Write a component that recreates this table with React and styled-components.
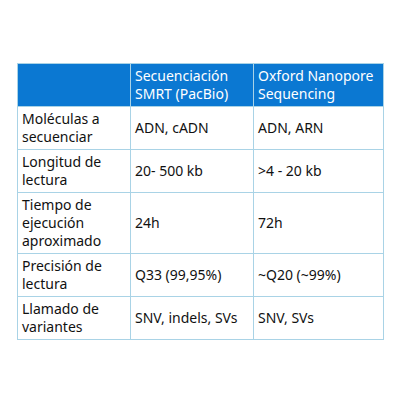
import React from "react";
import styled, { createGlobalStyle } from "styled-components";

const GlobalStyle = createGlobalStyle`
  html, body {
    margin: 0;
    padding: 0;
    background: #ffffff;
  }
  body {
    font-family: "Noto Sans", "Open Sans", sans-serif;
  }
`;

const Page = styled.div`
  width: 400px;
  height: 400px;
  padding: 63px 0 0 17px;
  box-sizing: border-box;
`;

const Table = styled.table`
  border-collapse: collapse;
  table-layout: fixed;
  width: 366px;
  font-size: 14px;
  line-height: 18px;
  color: #111;
`;

const HeadCell = styled.th`
  background: #0b78d2;
  color: #ffffff;
  font-weight: normal;
  text-align: left;
  vertical-align: top;
  padding: 3px 4px;
  border: 1px solid #a9d3e6;
  height: 35px;
`;

const Cell = styled.td`
  text-align: left;
  vertical-align: middle;
  padding: 3px 4px;
  border: 1px solid #a9d3e6;
`;

const rows = [
  ["Moléculas a secuenciar", "ADN, cADN", "ADN, ARN"],
  ["Longitud de lectura", "20- 500 kb", ">4 - 20 kb"],
  ["Tiempo de ejecución aproximado", "24h", "72h"],
  ["Precisión de lectura", "Q33 (99,95%)", "~Q20 (~99%)"],
  ["Llamado de variantes", "SNV, indels, SVs", "SNV, SVs"],
];

export default function App() {
  return (
    <Page>
      <GlobalStyle />
      <Table>
        <colgroup>
          <col style={{ width: 113 }} />
          <col style={{ width: 123 }} />
          <col style={{ width: 130 }} />
        </colgroup>
        <thead>
          <tr>
            <HeadCell />
            <HeadCell>Secuenciación SMRT (PacBio)</HeadCell>
            <HeadCell>Oxford Nanopore Sequencing</HeadCell>
          </tr>
        </thead>
        <tbody>
          {rows.map((r) => (
            <tr key={r[0]}>
              {r.map((c, i) => (
                <Cell key={i}>{c}</Cell>
              ))}
            </tr>
          ))}
        </tbody>
      </Table>
    </Page>
  );
}
